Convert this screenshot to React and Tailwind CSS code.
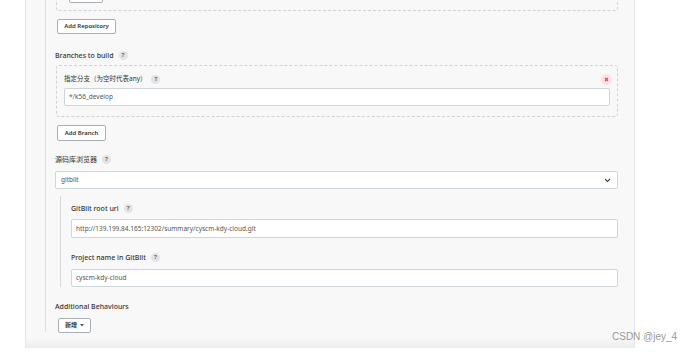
const FONT = { fontFamily: '"Noto Sans", "Noto Sans CJK SC", sans-serif' }

function Help() {
  return (
    <span className="ml-[5px] inline-flex h-[9px] w-[9px] items-center justify-center rounded-full bg-[#e3e3e3] text-[6px] font-bold leading-none text-[#666]">
      ?
    </span>
  )
}

function Label({ children, className = '' }) {
  return (
    <div className={`flex h-[10px] items-center text-[7px] leading-none text-[#333] ${className}`}>
      {children}
      <Help />
    </div>
  )
}

function Input({ value, className = '' }) {
  return (
    <div
      className={`flex items-center rounded-[2px] border border-[#cfd6db] bg-white pl-[4px] text-[6.5px] text-[#555] ${className}`}
    >
      {value}
    </div>
  )
}

function Button({ children, className = '' }) {
  return (
    <div
      className={`flex items-center justify-center rounded-[2px] border border-[#a9b0b5] bg-white text-[6px] font-semibold text-[#333] ${className}`}
    >
      {children}
    </div>
  )
}

export default function App() {
  return (
    <div className="relative h-[352px] w-[693px] overflow-hidden bg-white" style={FONT}>
      <div className="relative ml-[25px] h-[348px] w-[610px] border-x border-[#e4e6e8] bg-[#f8f8f8]">
        <div className="flow-root ml-[19px] h-[332px] border-l border-[#dcdfe2] pl-[9px] pr-[16px]">
          {/* repository box tail */}
          <div className="-mt-[20px] ml-[1px] h-[31px] rounded-b-[3px] border border-dashed border-[#cfd3d6] pl-[12px] pt-[6px]">
            <div className="h-[16px] w-[34px] rounded-[2px] border border-[#a9b0b5] bg-white" />
          </div>

          <Button className="ml-[2px] mt-[8px] h-[15px] w-[59px]">Add Repository</Button>

          <Label className="mt-[16px] font-medium">Branches to build</Label>

          <div className="ml-[1px] mt-[5px] h-[52px] rounded-[3px] border border-dashed border-[#cfd3d6] pl-[7px] pr-[7px] pt-[8px]">
            <div className="flex h-[10px] items-center justify-between">
              <div className="flex items-center text-[6.5px] leading-none text-[#333]">
                指定分支（为空时代表any）
                <Help />
              </div>
              <div className="-mr-[2px] flex h-[11px] w-[11px] items-center justify-center rounded-full bg-[#fbe3e6]">
                <svg width="5" height="5" viewBox="0 0 5 5">
                  <path d="M1 1L4 4M4 1L1 4" stroke="#e5484d" strokeWidth="1.2" />
                </svg>
              </div>
            </div>
            <Input value="*/k56_develop" className="mt-[4px] h-[18px]" />
          </div>

          <Button className="ml-[2px] mt-[8px] h-[16px] w-[49px]">Add Branch</Button>

          <Label className="mt-[13px]">源码库浏览器</Label>

          <div className="mt-[7px] flex h-[18px] items-center justify-between rounded-[2px] border border-[#cfd6db] bg-white pl-[5px] pr-[6px] text-[6.5px] text-[#555]">
            gitblit
            <svg width="7" height="5" viewBox="0 0 7 5">
              <path d="M1 1L3.5 3.5L6 1" stroke="#444" strokeWidth="1.1" fill="none" />
            </svg>
          </div>

          <div className="ml-[5px] mt-[7px] h-[91px] border-l border-[#d6d9dc] pl-[10px] pt-[7px]">
            <Label className="font-medium">GitBlit root url</Label>
            <Input
              value="http://139.199.84.165:12302/summary/cyscm-kdy-cloud.git"
              className="mt-[6px] h-[19px]"
            />
            <Label className="mt-[14px] font-medium">Project name in GitBlit</Label>
            <Input value="cyscm-kdy-cloud" className="mt-[7px] h-[18px]" />
          </div>

          <div className="mt-[14px] flex h-[10px] items-center text-[7px] font-medium leading-none text-[#333]">
            Additional Behaviours
          </div>
          <Button className="ml-[3px] mt-[7px] h-[15px] w-[33px] gap-[3px] font-normal">
            新增
            <svg width="4" height="3" viewBox="0 0 4 3">
              <path d="M0 0H4L2 2.5Z" fill="#555" />
            </svg>
          </Button>
        </div>
        <div className="absolute bottom-0 left-0 right-0 h-[10px] bg-gradient-to-b from-[#f8f8f8] to-[#ececec]" />
      </div>
      <div
        className="absolute left-[612px] top-[331px] text-[10px] leading-[12px] text-[#9a9a9a]"
        style={{ fontFamily: '"Liberation Sans", Arial, sans-serif' }}
      >
        CSDN @jey_4
      </div>
    </div>
  )
}
